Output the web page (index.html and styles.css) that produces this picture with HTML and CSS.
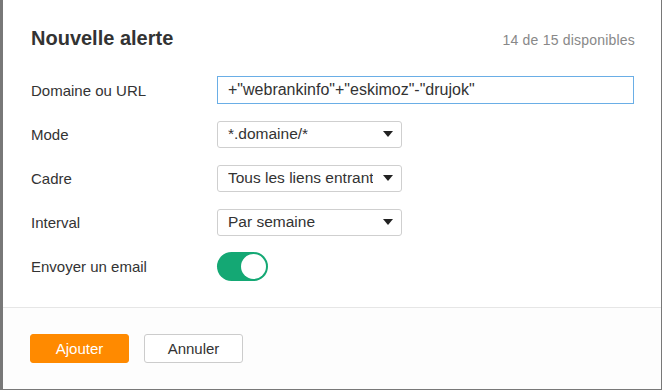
FILE: index.html
```html
<!DOCTYPE html>
<html lang="fr">
<head>
<meta charset="utf-8">
<link rel="stylesheet" href="styles.css">
</head>
<body>
<div class="modal">
  <div class="modal-body">
    <div class="header">
      <h1 class="title">Nouvelle alerte</h1>
      <span class="count">14 de 15 disponibles</span>
    </div>
    <div class="form">
      <div class="row">
        <label class="label">Domaine ou URL</label>
        <div class="input">+"webrankinfo"+"eskimoz"-"drujok"</div>
      </div>
      <div class="row">
        <label class="label">Mode</label>
        <div class="select"><span class="select-text">*.domaine/*</span><svg class="caret" width="10" height="6" viewBox="0 0 10 6"><path d="M0 0H10L5 6Z" fill="#222"/></svg></div>
      </div>
      <div class="row">
        <label class="label">Cadre</label>
        <div class="select"><span class="select-text">Tous les liens entrants</span><svg class="caret" width="10" height="6" viewBox="0 0 10 6"><path d="M0 0H10L5 6Z" fill="#222"/></svg></div>
      </div>
      <div class="row">
        <label class="label">Interval</label>
        <div class="select"><span class="select-text">Par semaine</span><svg class="caret" width="10" height="6" viewBox="0 0 10 6"><path d="M0 0H10L5 6Z" fill="#222"/></svg></div>
      </div>
      <div class="row">
        <label class="label">Envoyer un email</label>
        <div class="toggle"><span class="knob"></span></div>
      </div>
    </div>
  </div>
  <div class="footer">
    <button class="btn btn-primary">Ajouter</button>
    <button class="btn btn-default">Annuler</button>
  </div>
</div>
</body>
</html>
```

FILE: styles.css
```css
* { box-sizing: border-box; }
html, body { margin: 0; padding: 0; }
body {
  background: #787878;
  width: 662px;
  height: 390px;
  overflow: hidden;
  font-family: "Liberation Sans", Arial, sans-serif;
  color: #333;
}
.modal {
  margin-left: 3px;
  width: 658px;
  height: 389px;
  background: #fff;
  display: flex;
  flex-direction: column;
}
.modal-body {
  padding: 26px 26px 19px 28px;
  border-bottom: 1px solid #e6e6e6;
}
.header {
  display: flex;
  justify-content: space-between;
  align-items: baseline;
  height: 24px;
}
.title {
  margin: 0;
  font-size: 20px;
  line-height: 24px;
  font-weight: bold;
  color: #333;
}
.count {
  font-size: 14px;
  color: #888;
  letter-spacing: 0.2px;
}
.form {
  margin-top: 18px;
  display: flex;
  flex-direction: column;
}
.row {
  height: 44px;
  display: flex;
  align-items: center;
}
.label {
  width: 186px;
  font-size: 15px;
  color: #333;
}
.input {
  width: 417px;
  height: 28px;
  border: 1px solid #6aaee6;
  padding-left: 10px;
  display: flex;
  align-items: center;
  font-size: 16px;
  color: #333;
}
.select {
  width: 185px;
  height: 27px;
  border: 1px solid #cfcfcf;
  border-radius: 3px;
  display: flex;
  align-items: center;
  padding-left: 10px;
  padding-right: 8px;
  font-size: 15.5px;
  color: #333;
}
.select-text {
  width: 145px;
  white-space: nowrap;
  overflow: hidden;
}
.caret {
  margin-left: auto;
}
.toggle {
  width: 51px;
  height: 29px;
  border-radius: 15px;
  background: #14a874;
  display: flex;
  align-items: center;
  justify-content: flex-end;
  padding-right: 2px;
}
.knob {
  width: 25px;
  height: 25px;
  border-radius: 50%;
  background: #fff;
}
.footer {
  flex: 1;
  background: #fdfdfd;
  padding: 26px 27px 0 27px;
  display: flex;
  align-items: flex-start;
  gap: 15px;
}
.btn {
  width: 99px;
  height: 29px;
  border-radius: 3px;
  font-family: "Liberation Sans", Arial, sans-serif;
  font-size: 15px;
  padding: 0;
}
.btn-primary {
  background: #ff8a00;
  border: 1px solid #ff8a00;
  color: #fff;
}
.btn-default {
  background: #fff;
  border: 1px solid #cccccc;
  color: #333;
}
```
